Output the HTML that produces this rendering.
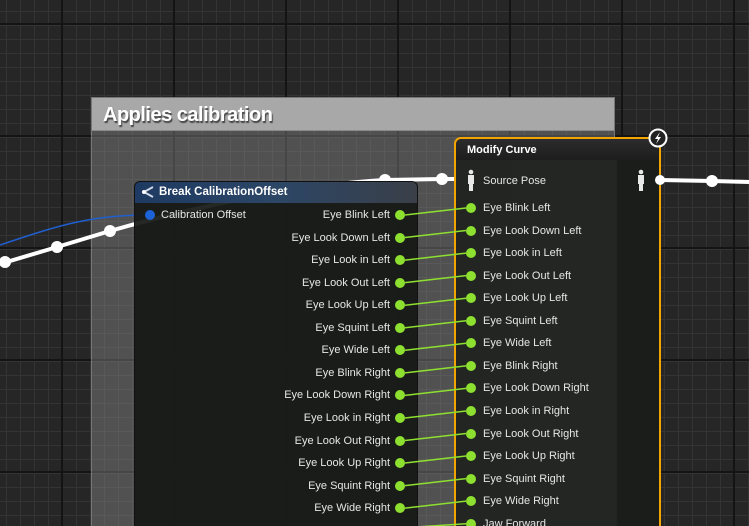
<!DOCTYPE html>
<html><head><meta charset="utf-8"><style>
*{margin:0;padding:0;box-sizing:border-box}
html,body{width:749px;height:526px;overflow:hidden}
body{position:relative;font-family:"Liberation Sans",sans-serif;
background-color:#262626;
background-image:
linear-gradient(90deg,#141414 2px,transparent 2px),
linear-gradient(0deg,#141414 2px,transparent 2px),
linear-gradient(90deg,#343434 1px,transparent 1px),
linear-gradient(0deg,#343434 1px,transparent 1px);
background-size:112px 112px,112px 112px,14px 14px,14px 14px;
background-position:61px 0,0 25px,6px 0,0 12px;}
.abs{position:absolute}
#comment{left:91px;top:97px;width:524px;height:429px;background:rgba(140,140,140,0.42);border:1px solid #777;border-bottom:none}
#chead{left:92px;top:98px;width:522px;height:33px;background:#a8a8a8;border-bottom:1px solid #8a8a8a;color:#fff;font-weight:bold;font-size:20px;padding:6px 0 0 11px;text-shadow:1px 2px 1px #444;letter-spacing:-0.5px}
#brk{left:134px;top:181px;width:284px;height:345px;background:rgba(22,24,22,0.93);border:1px solid #111;border-bottom:none;border-radius:6px 6px 0 0}
#brkh{left:135px;top:182px;width:282px;height:21px;border-radius:5px 5px 0 0;background:linear-gradient(90deg,#1e3a62,#2c4666 50%,#3a3f48);color:#fff;font-size:11.5px;font-weight:bold;padding:4px 0 0 24px}
#mc{left:454px;top:137px;width:207px;height:389px;border:2px solid #f2a500;border-bottom:none;border-radius:7px 7px 0 0;background:linear-gradient(90deg,#222522 0,#242624 160px,#1a1d1a 162px,#1a1d1a 100%)}
#mch{left:456px;top:139px;width:203px;height:21px;border-radius:5px 5px 0 0;background:linear-gradient(180deg,#2c2c2c,#1d1d1d);color:#fff;font-size:11px;font-weight:bold;padding:5px 0 0 11px}
.l{position:absolute;color:#e6e6e6;font-size:11px;white-space:nowrap}
.r{text-align:right;width:200px}
.pin{position:absolute;width:10px;height:10px;border-radius:50%;background:#8ee030}
</style></head><body>
<div id="comment" class="abs"></div>
<div id="chead" class="abs">Applies calibration</div>
<svg class="abs" style="left:0;top:0" width="749" height="526">
<path d="M0 245 C60 225 90 215 150 215" stroke="#1f5fd0" stroke-width="1.5" fill="none"/>
<path d="M0 264 L57 247 L110 231 C200 205 300 185 385 180 L442 179 L470 179" stroke="#fff" stroke-width="4" fill="none"/>
<g fill="#fff"><circle cx="5" cy="262" r="6"/><circle cx="57" cy="247" r="6"/><circle cx="110" cy="231" r="6"/><circle cx="385" cy="180" r="6"/><circle cx="442" cy="179" r="6"/></g>
</svg>
<div id="brk" class="abs"></div>
<div id="brkh" class="abs">Break CalibrationOffset</div>
<svg class="abs" style="left:141px;top:185px" width="14" height="14"><path d="M12 2 L3 7 L12 12" stroke="#cfd8e8" stroke-width="2" fill="none"/><circle cx="3" cy="7" r="2" fill="#fff"/></svg>
<div class="pin" style="left:145px;top:210px;background:#1d63d8"></div>
<div class="l" style="left:161px;top:209px">Calibration Offset</div>
<div id="mc" class="abs"></div>
<div id="mch" class="abs">Modify Curve</div>
<svg class="abs" style="left:648px;top:128px" width="22" height="22"><circle cx="10" cy="10" r="8.5" fill="#222" stroke="#fff" stroke-width="2"/><path d="M12 4 L7 11 L10 11 L8 16 L13 9 L10 9 Z" fill="#fff"/></svg>
<svg class="abs" style="left:0;top:0" width="749" height="526">
<path d="M660 180 L712 181 L749 182" stroke="#fff" stroke-width="4" fill="none"/>
<circle cx="712" cy="181" r="6" fill="#fff"/><circle cx="660" cy="180" r="5" fill="#fff"/>
<g fill="#e8e8e8"><circle cx="471" cy="172" r="2.3"/><rect x="468" y="175" width="6" height="9"/><rect x="469" y="183" width="4" height="8"/>
<circle cx="641" cy="172" r="2.3"/><rect x="638" y="175" width="6" height="9"/><rect x="639" y="183" width="4" height="8"/></g>
<g id="wires" stroke="#8ee030" stroke-width="1.5" fill="none"></g>
</svg>
<div class="l" style="left:483px;top:175px">Source Pose</div>
<div id="rows"></div>
<script>
var n=["Eye Blink Left","Eye Look Down Left","Eye Look in Left","Eye Look Out Left","Eye Look Up Left","Eye Squint Left","Eye Wide Left","Eye Blink Right","Eye Look Down Right","Eye Look in Right","Eye Look Out Right","Eye Look Up Right","Eye Squint Right","Eye Wide Right","Jaw Forward"];
var h="",w="";
for(var i=0;i<n.length;i++){var yl=215+i*22.55,yr=208+i*22.55;
if(i<14){h+='<div class="l r" style="left:190px;top:'+(yl-6)+'px">'+n[i]+'</div><div class="pin" style="left:395px;top:'+(yl-5)+'px"></div>';}
h+='<div class="pin" style="left:466px;top:'+(yr-5)+'px"></div><div class="l" style="left:483px;top:'+(yr-6)+'px">'+n[i]+'</div>';
w+='<path d="M405 '+(i<14?yl:yl-3)+' L466 '+yr+'"/>';}
document.getElementById('rows').innerHTML=h;
document.getElementById('wires').innerHTML=w;
</script>
</body></html>
